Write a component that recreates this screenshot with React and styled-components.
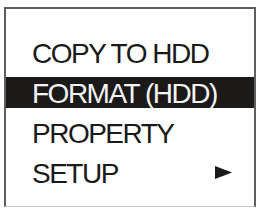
import styled, { createGlobalStyle } from "styled-components";

const Global = createGlobalStyle`
  body {
    margin: 0;
    background: #fff;
    font-family: "Liberation Sans", Arial, sans-serif;
  }
`;

const items = [
  { label: "COPY TO HDD" },
  { label: "FORMAT (HDD)", active: true },
  { label: "PROPERTY" },
  { label: "SETUP", sub: true },
];

const App = () => {
  return (
    <>
      <Global />
      <Frame>
        <List>
          {items.map((it) => (
            <Item key={it.label} $active={it.active}>
              <Label>{it.label}</Label>
              {it.sub && (
                <Arrow viewBox="0 0 17 13">
                  <polygon points="0,0 17,6.5 0,13" fill="#1a1a1a" />
                </Arrow>
              )}
            </Item>
          ))}
        </List>
      </Frame>
    </>
  );
};

const Frame = styled.div`
  box-sizing: border-box;
  margin: 7px 0 0 4px;
  width: 252px;
  height: 200px;
  border: 2px solid #5e5e5e;
  border-bottom: 1px solid #c4c4c4;
  background: #fff;
`;

const List = styled.div`
  display: flex;
  flex-direction: column;
  gap: 9px;
  padding-top: 28px;
`;

const Item = styled.div`
  display: flex;
  align-items: center;
  height: 31px;
  padding: 2px 22px 0 26px;
  box-sizing: border-box;
  background: ${(p) => (p.$active ? "#1c1919" : "transparent")};
  color: ${(p) => (p.$active ? "#f4f4f4" : "#1a1a1a")};
`;

const Label = styled.span`
  font-size: 28px;
  line-height: 29px;
  letter-spacing: -1.5px;
  white-space: nowrap;
`;

const Arrow = styled.svg`
  margin-left: auto;
  margin-top: -2px;
  width: 17px;
  height: 13px;
`;

export default App;
